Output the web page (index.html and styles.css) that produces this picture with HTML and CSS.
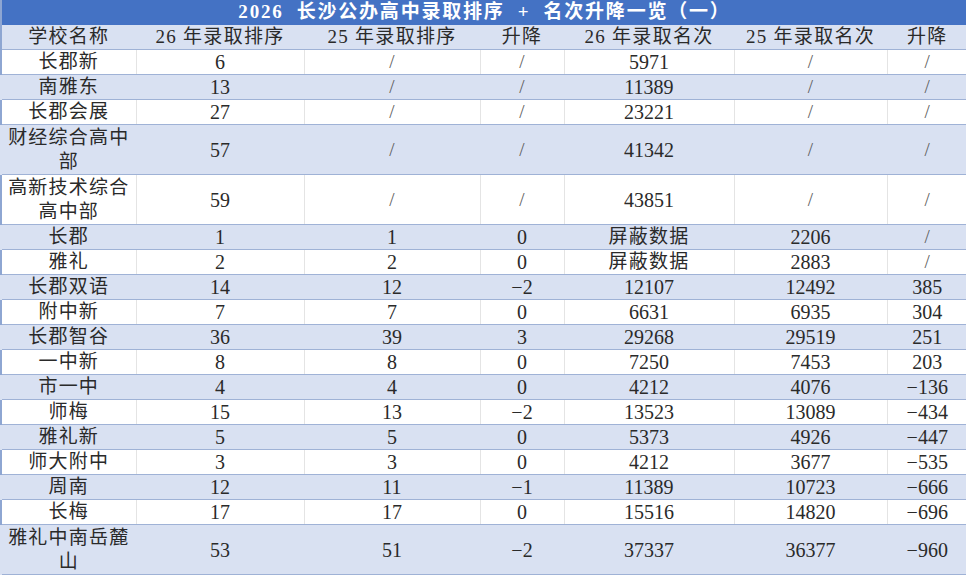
FILE: index.html
```html
<!DOCTYPE html>
<html lang="zh-CN">
<head>
<meta charset="utf-8">
<title>2026 长沙公办高中录取排序</title>
<link rel="stylesheet" href="styles.css">
</head>
<body>
<table class="rank">
  <colgroup>
    <col class="c1"><col class="c2"><col class="c3"><col class="c4"><col class="c5"><col class="c6"><col class="c7">
  </colgroup>
  <thead>
    <tr class="title"><th colspan="7">2026&nbsp; 长沙公办高中录取排序 &nbsp;+&nbsp; 名次升降一览（一）</th></tr>
    <tr class="head">
      <th>学校名称</th><th>26 年录取排序</th><th>25 年录取排序</th><th>升降</th><th>26 年录取名次</th><th>25 年录取名次</th><th>升降</th>
    </tr>
  </thead>
  <tbody>
    <tr class="w"><td class="name">长郡新</td><td>6</td><td class="na">/</td><td class="na">/</td><td>5971</td><td class="na">/</td><td class="na">/</td></tr>
    <tr class="b"><td class="name">南雅东</td><td>13</td><td class="na">/</td><td class="na">/</td><td>11389</td><td class="na">/</td><td class="na">/</td></tr>
    <tr class="w"><td class="name">长郡会展</td><td>27</td><td class="na">/</td><td class="na">/</td><td>23221</td><td class="na">/</td><td class="na">/</td></tr>
    <tr class="b tall"><td class="name">财经综合高中部</td><td>57</td><td class="na">/</td><td class="na">/</td><td>41342</td><td class="na">/</td><td class="na">/</td></tr>
    <tr class="w tall"><td class="name">高新技术综合高中部</td><td>59</td><td class="na">/</td><td class="na">/</td><td>43851</td><td class="na">/</td><td class="na">/</td></tr>
    <tr class="b"><td class="name">长郡</td><td>1</td><td>1</td><td>0</td><td class="cn">屏蔽数据</td><td>2206</td><td class="na">/</td></tr>
    <tr class="w"><td class="name">雅礼</td><td>2</td><td>2</td><td>0</td><td class="cn">屏蔽数据</td><td>2883</td><td class="na">/</td></tr>
    <tr class="b"><td class="name">长郡双语</td><td>14</td><td>12</td><td>−2</td><td>12107</td><td>12492</td><td>385</td></tr>
    <tr class="w"><td class="name">附中新</td><td>7</td><td>7</td><td>0</td><td>6631</td><td>6935</td><td>304</td></tr>
    <tr class="b"><td class="name">长郡智谷</td><td>36</td><td>39</td><td>3</td><td>29268</td><td>29519</td><td>251</td></tr>
    <tr class="w"><td class="name">一中新</td><td>8</td><td>8</td><td>0</td><td>7250</td><td>7453</td><td>203</td></tr>
    <tr class="b"><td class="name">市一中</td><td>4</td><td>4</td><td>0</td><td>4212</td><td>4076</td><td>−136</td></tr>
    <tr class="w"><td class="name">师梅</td><td>15</td><td>13</td><td>−2</td><td>13523</td><td>13089</td><td>−434</td></tr>
    <tr class="b"><td class="name">雅礼新</td><td>5</td><td>5</td><td>0</td><td>5373</td><td>4926</td><td>−447</td></tr>
    <tr class="w"><td class="name">师大附中</td><td>3</td><td>3</td><td>0</td><td>4212</td><td>3677</td><td>−535</td></tr>
    <tr class="b"><td class="name">周南</td><td>12</td><td>11</td><td>−1</td><td>11389</td><td>10723</td><td>−666</td></tr>
    <tr class="w"><td class="name">长梅</td><td>17</td><td>17</td><td>0</td><td>15516</td><td>14820</td><td>−696</td></tr>
    <tr class="b tall"><td class="name">雅礼中南岳麓山</td><td>53</td><td>51</td><td>−2</td><td>37337</td><td>36377</td><td>−960</td></tr>
  </tbody>
</table>
</body>
</html>
```

FILE: styles.css
```css
html, body {
  margin: 0;
  padding: 0;
  background: #ffffff;
}

.rank {
  width: 966px;
  table-layout: fixed;
  border-collapse: collapse;
  border-spacing: 0;
  font-family: "Liberation Serif", "Noto Sans CJK SC", serif;
  font-size: 20px;
  color: #2a2a2a;
  text-align: center;
}

.c1 { width: 135px; }
.c2 { width: 168px; }
.c3 { width: 176px; }
.c4 { width: 84px; }
.c5 { width: 170px; }
.c6 { width: 153px; }
.c7 { width: 80px; }

.rank th,
.rank td {
  padding: 0 2px;
  height: 24px;
  line-height: 24px;
  vertical-align: middle;
  font-weight: normal;
  border-bottom: 1px solid #9fb2d6;
  border-left: 1px solid #e4e4e4;
  overflow: hidden;
}

.rank tr > :first-child {
  border-left: 2px solid #8ea6d2;
}

.title th {
  background: #4472c4;
  color: #ffffff;
  font-weight: bold;
  font-size: 19px;
  letter-spacing: 1.8px;
  border-bottom: 1px solid #4472c4;
}

.head th {
  background: #d9e1f2;
  border-left-color: #d9e1f2;
  font-size: 19px;
  letter-spacing: 1.3px;
}

.rank tr.b td {
  background: #d9e1f2;
  border-left-color: #d9e1f2;
}

.rank tr.w td {
  background: #ffffff;
}

.rank tr.tall td {
  height: 49px;
}

.name,
.cn {
  font-size: 19px;
  letter-spacing: 1.2px;
}

.na {
  color: #5e5e5e;
  font-size: 19px;
}
```
